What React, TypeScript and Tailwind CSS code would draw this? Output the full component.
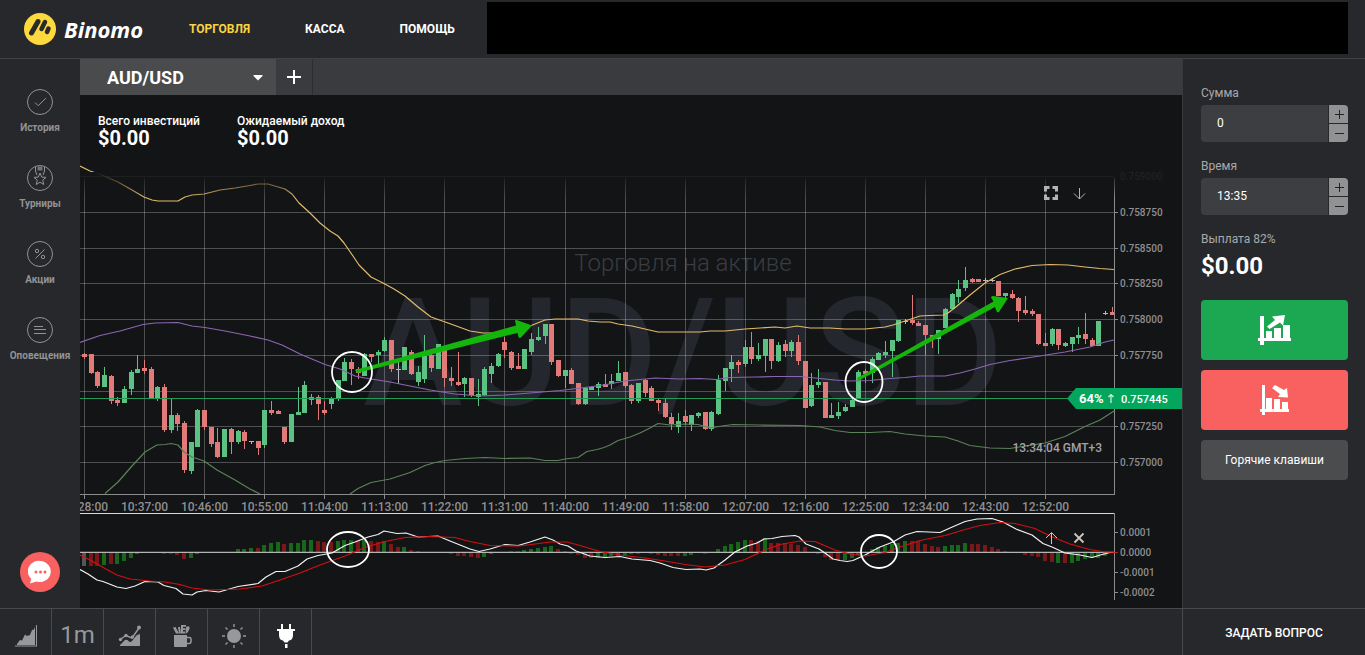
import React, { useState } from "react";

type Tone = "r" | "g" | "w";
type Candle = [number, number, number, number, Tone];

// [high, body top, body bottom, low, tone], one entry for each minute
const CANDLES: Candle[] = [
  [353, 354, 357, 359, "r"], [354, 354, 373, 374, "r"], [371, 372, 386, 388, "r"], [367, 375, 387, 387, "g"],
  [375, 376, 401, 404, "r"], [397, 400, 403, 406, "r"], [386, 389, 403, 403, "g"], [370, 372, 389, 395, "g"],
  [355, 369, 373, 373, "g"], [360, 368, 371, 374, "r"], [367, 369, 398, 398, "r"], [386, 387, 398, 401, "g"],
  [384, 387, 430, 432, "r"], [398, 415, 430, 433, "g"], [413, 415, 424, 431, "r"], [421, 423, 470, 473, "r"],
  [442, 442, 471, 474, "g"], [409, 410, 447, 447, "g"], [410, 410, 427, 430, "r"], [427, 427, 444, 447, "r"],
  [428, 442, 457, 458, "r"], [429, 429, 457, 457, "g"], [428, 429, 442, 454, "r"], [430, 431, 442, 444, "g"],
  [430, 432, 441, 449, "r"], [441, 441, 442, 444, "w"], [441, 441, 448, 455, "r"], [410, 410, 445, 448, "g"],
  [401, 410, 413, 415, "r"], [410, 411, 414, 414, "r"], [427, 427, 442, 444, "r"], [414, 414, 442, 442, "g"],
  [387, 412, 415, 415, "g"], [381, 385, 413, 413, "g"], [394, 397, 400, 405, "g"], [395, 397, 404, 420, "r"],
  [401, 410, 413, 415, "r"], [397, 398, 404, 409, "g"], [380, 380, 399, 401, "g"], [358, 362, 381, 381, "g"],
  [359, 362, 369, 385, "r"], [367, 369, 373, 379, "r"], [353, 354, 376, 376, "g"], [354, 354, 357, 362, "r"],
  [350, 352, 355, 364, "g"], [337, 340, 351, 352, "g"], [340, 340, 369, 372, "r"], [362, 369, 370, 384, "w"],
  [347, 347, 370, 370, "g"], [350, 352, 374, 375, "r"], [366, 372, 382, 386, "g"], [335, 356, 379, 383, "g"],
  [354, 355, 368, 372, "r"], [344, 344, 369, 369, "g"], [347, 350, 378, 387, "r"], [367, 378, 381, 386, "r"],
  [352, 382, 385, 386, "r"], [377, 378, 384, 397, "g"], [378, 378, 395, 397, "r"], [379, 394, 397, 406, "g"],
  [367, 369, 395, 396, "g"], [363, 366, 374, 383, "g"], [353, 354, 366, 367, "g"], [337, 342, 350, 358, "r"],
  [351, 352, 368, 370, "r"], [353, 366, 369, 369, "r"], [349, 349, 369, 369, "g"], [333, 339, 352, 355, "g"],
  [327, 337, 340, 341, "g"], [324, 324, 336, 344, "g"], [324, 324, 362, 365, "r"], [360, 360, 376, 377, "r"],
  [370, 370, 376, 388, "g"], [368, 370, 384, 384, "r"], [383, 383, 404, 405, "r"], [387, 388, 404, 405, "g"],
  [387, 387, 390, 390, "g"], [382, 384, 388, 396, "g"], [374, 384, 387, 387, "r"], [374, 381, 384, 389, "g"],
  [361, 373, 381, 381, "g"], [372, 372, 386, 388, "r"], [384, 385, 401, 404, "r"], [383, 383, 401, 403, "g"],
  [379, 380, 393, 397, "r"], [386, 388, 401, 401, "r"], [399, 400, 403, 411, "r"], [399, 403, 417, 418, "r"],
  [413, 417, 424, 430, "r"], [413, 421, 427, 433, "g"], [410, 416, 422, 425, "r"], [415, 415, 425, 431, "g"],
  [412, 413, 416, 418, "g"], [412, 412, 429, 430, "r"], [411, 412, 429, 431, "g"], [375, 380, 414, 415, "g"],
  [368, 368, 381, 391, "g"], [355, 362, 369, 382, "g"], [360, 362, 365, 373, "r"], [340, 347, 364, 367, "g"],
  [332, 347, 359, 364, "r"], [343, 355, 359, 361, "g"], [339, 339, 356, 372, "g"], [339, 339, 361, 369, "r"],
  [342, 345, 361, 362, "g"], [340, 344, 351, 357, "r"], [340, 342, 351, 357, "g"], [335, 342, 361, 365, "r"],
  [361, 361, 408, 408, "r"], [373, 385, 406, 407, "g"], [369, 382, 385, 388, "g"], [382, 382, 418, 418, "r"],
  [403, 415, 418, 418, "g"], [402, 412, 416, 419, "g"], [404, 407, 411, 412, "g"], [399, 400, 407, 407, "g"],
  [370, 372, 399, 399, "g"], [369, 371, 374, 383, "r"], [357, 359, 373, 383, "g"], [352, 353, 360, 360, "g"],
  [341, 352, 355, 358, "g"], [340, 340, 351, 377, "g"], [320, 320, 341, 342, "g"], [319, 321, 322, 324, "w"],
  [295, 320, 323, 325, "r"], [321, 323, 326, 326, "r"], [325, 325, 335, 355, "r"], [335, 335, 338, 348, "r"],
  [330, 330, 339, 354, "g"], [308, 309, 328, 328, "g"], [293, 294, 309, 310, "g"], [280, 289, 297, 303, "g"],
  [267, 280, 288, 291, "g"], [278, 279, 282, 283, "r"], [279, 279, 282, 282, "r"], [278, 280, 281, 283, "w"],
  [278, 280, 281, 282, "w"], [281, 281, 296, 296, "r"], [293, 293, 296, 298, "g"], [290, 294, 298, 299, "r"],
  [297, 298, 311, 322, "r"], [296, 310, 313, 315, "r"], [309, 311, 314, 316, "r"], [314, 314, 344, 345, "r"],
  [333, 343, 346, 346, "r"], [328, 329, 344, 346, "g"], [329, 329, 345, 350, "r"], [342, 343, 346, 347, "g"],
  [337, 337, 344, 352, "g"], [327, 335, 338, 344, "g"], [313, 334, 339, 344, "r"], [338, 340, 346, 346, "r"],
  [321, 321, 346, 346, "g"], [311, 313, 314, 315, "w"], [307, 312, 315, 315, "r"],
];

// Signed bar heights; the letter says whether the bar is green or red
const HISTOGRAM =
  "w-14 r-14 r-14 g-13 r-12 g-12 g-9 g-6 g-2 r0 r-1 r0 r-2 r-2 r-3 r-7 g-6 g-2 r0 r-1 r-1 g0 g0 g3 g3 g4 r4 g7 g9 g10 r8 g9 g9 g12 g12 r11 r10 r10 g11 g12 g12 r11 g12 r11 r10 g11 r8 r5 g5 r2 r1 r0 r0 g0 r-1 r-2 r-4 r-4 r-5 r-6 g-5 g-2 g0 g0 r1 r1 g2 g3 g4 g5 g6 r3 r1 r-2 r-3 r-6 r-6 g-6 g-5 g-4 g-4 g-3 g-2 r-2 g-1 r-2 r-3 r-4 r-4 r-4 g-4 g-3 g-1 r-2 g0 g3 g6 g8 g10 g12 r12 r11 g14 r9 r9 r9 r8 r7 r5 r0 r-2 r-5 r-8 r-8 g-8 g-6 g-3 g0 g3 g5 g6 g8 g9 g11 r11 r11 r8 r6 r5 g6 g7 g7 g9 r8 r8 r7 r5 r3 r1 r0 r-1 r-3 r-4 r-5 r-9 r-10 g-11 r-11 g-11 g-9 g-7 g-6 g-6 g-4"
    .split(" ")
    .map((s) => ({ tone: s[0] as Tone, value: Number(s.slice(1)) }));

const UPPER =
  "80,166 90,171 102,175 118,182 132,190 144,197 152,200 158,201 178,201 185,197 192,195 204,194 220,190 235,188 247,186 258,184 268,184 285,189 292,194 299,203 310,213 320,223 330,231 338,236 344,243 353,256 359,265 371,277 383,283 394,289 405,296 418,307 431,317 448,323 470,331 483,333 505,333 530,326 545,320 555,319 578,319 588,321 600,322 610,322 618,324 632,326 645,329 658,332 670,332 685,332 700,332 710,331 725,331 745,329 760,328 775,327 785,328 797,326 810,328 830,328 845,329 865,329 885,327 893,325 905,321 920,316 930,315.5 943,315 948,313 957,306 970,295 985,283 1000,274.5 1015,269 1032,265.5 1050,264.5 1068,265 1085,267 1100,268.5 1114,269.5";
const MIDDLE =
  "80,342.5 100,335.5 120,331 143,324.5 155,323 178,322.5 192,326 205,327.5 225,331 250,336 268,340 282,345 300,354 325,364.5 340,369 355,376 365,378 390,382 410,386 430,390 455,394 480,396 505,395 530,393 560,390.5 585,387.5 600,385.5 612,383.5 625,381 640,379.5 655,378 680,379 700,378.5 716,379.5 730,377.5 755,377 775,376.5 800,376.5 815,378 835,380 850,381 870,380.5 890,378.5 905,377.5 920,376 945,376 960,373 975,369 990,364.5 1010,360.5 1040,356 1065,352 1090,347 1105,342 1114,340";
const LOWER_LEFT =
  "105,493.5 118,482 132,466 145,452 150,449 157,445 165,444.5 171,443.5 178,445 184,452 192,457 204,461 217,470 235,480 250,489 260,494";
const LOWER =
  "350,494 358,488.5 371,482.5 390,479 410,472.5 425,465.5 435,462.5 445,460.5 465,458.5 485,457.5 505,458.5 530,458 545,460.5 558,460.5 565,459 578,457.5 587,451.5 597,449.5 604,447.5 610,445 618,440.5 630,437 640,433 650,428 658,423.5 670,425 685,424 698,424.5 710,428 722,426 733,424.5 760,425 800,425.5 820,427 835,430.5 850,432.5 870,432.5 890,431.5 905,434 925,436 945,437 958,441 970,445.5 990,448 1010,448.5 1025,446 1045,443 1065,436.5 1085,426.5 1100,420 1114,411";
const MACD =
  "80,569.5 88,574 97,580 103,581.5 117,587 126,588.5 135,586 145,581.5 158,582 164,585.5 176,588.5 183,594 192,595 197,592 206,590.5 219,592 238,586.5 258,583.5 266,577 276,571.5 285,571.5 298,566 307,559 318,555.5 332,553 345,545.5 355,542 368,537 378,534.5 384,531 397,533.5 406,533 418,537 438,536 450,541 460,545 470,549 479,551.5 490,549 505,544.5 518,545.5 530,542 545,537 553,540 560,544 568,546 576,551 590,556 605,557.5 620,556.5 632,559 650,560.5 660,563 673,567.5 686,569.5 700,569 706,570 714,568 725,560 735,552 747,546 757,543 764,539 772,538.5 782,536.5 795,535.5 799,537 806,544 819,549 825,553 833,559 840,560.5 847,561.5 853,560.5 865,555 880,547 893,542 905,535 917,531.5 940,532.5 950,528 965,521.5 977,519 992,518.5 1003,522 1016,529 1032,535 1043,543.5 1052,547 1065,553 1080,555 1092,557.5 1102,554.5 1110,552.5 1114,552.5";
const SIGNAL =
  "80,555 92,561 105,568.5 117,575 130,579 150,581 165,582 180,584.5 192,588 210,590 240,589 262,586 280,580 300,573 320,565 345,556 365,547.5 385,541.5 405,537.5 430,536.5 455,537.5 470,541.5 490,545.5 520,546 535,544 550,542 567,542 580,545.5 600,551.5 620,555 645,558 665,561 685,564.5 705,567 725,565 745,559.5 765,550 780,544.5 800,541 815,541.5 835,550 850,554 865,556 885,552.5 900,547 920,540.5 945,535.5 965,529.5 980,525.5 1000,522.5 1015,523.5 1035,528.5 1050,536 1070,544 1090,549.5 1105,552 1118,552.5";

const TIMES: [number, string][] = [
  [84.5, "10:28:00"], [144.5, "10:37:00"], [204.5, "10:46:00"], [264.5, "10:55:00"], [324.5, "11:04:00"],
  [384.5, "11:13:00"], [444.5, "11:22:00"], [504.5, "11:31:00"], [565.5, "11:40:00"], [625.5, "11:49:00"],
  [685.5, "11:58:00"], [745.5, "12:07:00"], [805.5, "12:16:00"], [865.5, "12:25:00"], [925.5, "12:34:00"],
  [985.5, "12:43:00"], [1045.5, "12:52:00"],
];
const PRICES: [number, string][] = [
  [176.5, "0.759000"], [212.5, "0.758750"], [248.5, "0.758500"], [283.5, "0.758250"], [319.5, "0.758000"],
  [355.5, "0.757750"], [391.5, ""], [426.5, "0.757250"], [462.5, "0.757000"],
];
const LEVELS: [number, string][] = [
  [532.5, "0.0001"], [552.5, "0.0000"], [572.5, "-0.0001"], [592.5, "-0.0002"],
];

const TONES: Record<Tone, string> = { r: "#e07b79", g: "#5bc283", w: "#b9b9bd" };
const BARS: Record<Tone, string> = { r: "#7a1719", g: "#17661a", w: "#555557" };
const candleX = (i: number) => Math.round(84 + i * 6.674);

function Chart() {
  return (
    <svg
      viewBox="80 160 1102 448"
      preserveAspectRatio="xMinYMin meet"
      className="block h-auto w-full"
      role="img"
      aria-label="AUD/USD"
      fontFamily="Roboto, sans-serif"
    >
      <defs>
        <linearGradient id="fade" x1="0" y1="0" x2="0" y2="1">
          <stop offset="0" stopColor="#131416" stopOpacity="1" />
          <stop offset="1" stopColor="#131416" stopOpacity="0" />
        </linearGradient>
      </defs>

      <text x="683" y="271" textAnchor="middle" fontSize="24" fontWeight="300" fill="#3a3c43">
        Торговля на активе
      </text>
      <text x="683" y="405" textAnchor="middle" fontSize="150" fontWeight="500" fill="#25272e">
        AUD/USD
      </text>

      <g stroke="#fff" strokeOpacity="0.25" shapeRendering="crispEdges">
        {PRICES.map(([y]) => (
          <line key={y} x1="80" x2="1114" y1={y} y2={y} />
        ))}
        {TIMES.map(([x]) => (
          <line key={x} x1={x} x2={x} y1="178" y2="494" />
        ))}
      </g>

      <g shapeRendering="crispEdges">
        {CANDLES.map(([high, top, bottom, low, tone], i) => {
          const x = candleX(i);
          return (
            <g key={i} fill={TONES[tone]}>
              <rect x={x} y={high} width="1" height={Math.max(low - high, 1)} />
              <rect x={x - 2} y={top} width="5" height={bottom - top} />
            </g>
          );
        })}
      </g>

      <g fill="none" strokeWidth="1.2" strokeLinejoin="round">
        <polyline points={UPPER} stroke="#e3ba6a" />
        <polyline points={MIDDLE} stroke="#8a66b0" />
        <polyline points={LOWER_LEFT} stroke="#5b8259" />
        <polyline points={LOWER} stroke="#5b8259" />
      </g>
      <line x1="80" x2="1070" y1="398.5" y2="398.5" stroke="#239a57" shapeRendering="crispEdges" />

      <g stroke="#8b8b8d" shapeRendering="crispEdges">
        <line x1="80" x2="1114" y1="494.5" y2="494.5" />
        <line x1="1114.5" x2="1114.5" y1="178" y2="495" />
        <line x1="1114.5" x2="1114.5" y1="513" y2="600" />
        {TIMES.map(([x]) => (
          <line key={x} x1={x} x2={x} y1="494" y2="499" />
        ))}
        {PRICES.slice(1).map(([y]) => (
          <line key={y} x1="1114" x2="1118" y1={y} y2={y} />
        ))}
        {LEVELS.map(([y]) => (
          <line key={y} x1="1114" x2="1118" y1={y} y2={y} />
        ))}
      </g>
      <rect x="80" y="172" width="1102" height="26" fill="url(#fade)" />

      <g fontSize="12" fill="#8f8f91" textAnchor="middle" fontWeight="500">
        {TIMES.map(([x, label]) => (
          <text key={x} x={x} y="511">
            {label}
          </text>
        ))}
      </g>
      <g fontSize="10" fill="#8f8f91" fontWeight="500">
        {PRICES.map(([y, label]) => (
          <text key={y} x="1120" y={y + 3.5} fillOpacity={y < 180 ? 0.13 : 1}>
            {label}
          </text>
        ))}
        {LEVELS.map(([y, label]) => (
          <text key={y} x="1120" y={y + 3.5}>
            {label}
          </text>
        ))}
      </g>
      <text x="1102" y="452" textAnchor="end" fontSize="12" fontWeight="500" fill="#a3a3a5">
        13:34:04 GMT+3
      </text>

      <line x1="80" x2="1114" y1="513.5" y2="513.5" stroke="#d8d8d8" shapeRendering="crispEdges" />
      <g shapeRendering="crispEdges">
        {HISTOGRAM.map(({ tone, value }, i) => (
          <rect
            key={i}
            x={candleX(i) - 2}
            y={value > 0 ? 552 - value : 552}
            width="4"
            height={Math.abs(value)}
            fill={BARS[tone]}
          />
        ))}
      </g>
      <line x1="80" x2="1114" y1="552.3" y2="552.3" stroke="#b4b4b4" strokeWidth="1.3" />
      <g fill="none" strokeWidth="1.2" strokeLinejoin="round">
        <polyline points={MACD} stroke="#f2f2f2" />
        <polyline points={SIGNAL} stroke="#d40f12" />
      </g>

      <g fill="#14b60c">
        <path d="M355 370 516 325.500 515 320.500Q516 319.500 518 320.500L532 325.500 521 337.500Q519 338.500 518.500 337L517.500 333 357 373Z" />
        <path d="M857 378 993.500 301.500 991 297.500Q991 296 993 296L1008 298 999 312Q997 313 996.500 311L995 307 858 381Z" />
      </g>
      <g fill="none" stroke="#fff" strokeWidth="1.8">
        <ellipse cx="352" cy="372" rx="20" ry="20" />
        <ellipse cx="864" cy="382" rx="18.500" ry="20" />
        <ellipse cx="348" cy="549.500" rx="21" ry="17.500" />
        <ellipse cx="879" cy="551.500" rx="18" ry="16.500" />
      </g>

      <path d="M1067 398.500 1076 388H1182V409H1076Z" fill="#04a65d" />
      <g fill="#fff">
        <text x="1079" y="403" fontSize="13" fontWeight="700">
          64%
        </text>
        <text x="1121" y="403" fontSize="11" fontWeight="500">
          0.757445
        </text>
      </g>
      <path d="M1111 403v-8.500m-2.500 2.500 2.500-2.500 2.500 2.500" fill="none" stroke="#d5f3e4" strokeWidth="1.200" />
    </svg>
  );
}

function Ring({ children }: { children: React.ReactNode }) {
  return (
    <svg viewBox="0 0 28 28" className="size-7" fill="none" stroke="currentColor" aria-hidden="true">
      <circle cx="14" cy="14" r="12.500" />
      {children}
    </svg>
  );
}

const SIDE_ITEMS = [
  { label: "История", icon: <path d="m9 14.500 3.200 3.200L20 10" /> },
  {
    label: "Турниры",
    icon: (
      <>
        <path d="m14 9 1.700 4.100 4.300.3-3.300 2.800 1 4.300-3.700-2.300-3.700 2.300 1-4.300L8 13.400l4.300-.3z" />
        <path d="M9.500 3v4l1.500 4M18.500 3v4L17 11" />
        <path d="M11.500 2.500h5v4h-5z" fill="currentColor" fillOpacity="0.7" stroke="none" />
      </>
    ),
  },
  {
    label: "Акции",
    icon: (
      <>
        <path d="m9.500 18.500 9-9" />
        <circle cx="11" cy="11" r="1.700" />
        <circle cx="17" cy="17" r="1.700" />
      </>
    ),
  },
  { label: "Оповещения", icon: <path d="M8 10.500h9M8 13.500h12M8 17.500h12" /> },
];

function Stepper({ label, id, initial }: { label: string; id: string; initial: string }) {
  const [value, setValue] = useState(initial);
  return (
    <div className="flex flex-col gap-1">
      <label htmlFor={id} className="text-[12px] leading-4 text-[#a9a9ab]">
        {label}
      </label>
      <div className="flex h-[37px] gap-px overflow-hidden rounded">
        <input
          id={id}
          value={value}
          onChange={(e) => setValue(e.target.value)}
          className="w-0 flex-1 bg-[#3d3e41] pb-[2px] pl-4 text-[12px] text-white outline-none"
        />
        <div className="flex w-[19px] flex-col gap-px">
          <button aria-label={label + " +"} className="flex flex-1 items-center justify-center bg-[#919293]">
            <svg viewBox="0 0 10 10" className="size-[10px]" stroke="#222" aria-hidden="true">
              <path d="M5.500 1v9M1 5.500h9" />
            </svg>
          </button>
          <button aria-label={label + " −"} className="flex flex-1 items-center justify-center bg-[#919293]">
            <svg viewBox="0 0 10 10" className="size-[10px]" stroke="#222" aria-hidden="true">
              <path d="M1 5.500h9" />
            </svg>
          </button>
        </div>
      </div>
    </div>
  );
}

const TOOLS = [
  {
    label: "Тип графика",
    icon: (
      <svg viewBox="0 0 24 24" className="size-6" fill="currentColor" aria-hidden="true">
        <path d="M3 21V20l3-4 2 .5 3-6 2 1.500 3-1 2-5 2-.5 1-3V21z" />
        <path d="M1 21.500h22v1H1zM22 1h1v21h-1z" />
      </svg>
    ),
  },
  { label: "1m", icon: null },
  {
    label: "Индикаторы",
    icon: (
      <svg viewBox="0 0 24 24" className="size-6" fill="currentColor" aria-hidden="true">
        <path d="M2 22v-1l5-5q2-1 3.500 1t3.500 0l4-5q1-1.500 2.500-1.500T22 9v13z" />
        <path d="m2 15.500 6-4 6 2.500 7-10" fill="none" stroke="currentColor" strokeWidth="1.500" />
        <circle cx="2.500" cy="15.500" r="1.700" />
        <circle cx="8" cy="11.500" r="1.700" />
        <circle cx="14.500" cy="13" r="1.700" />
        <circle cx="21" cy="3.500" r="2" />
      </svg>
    ),
  },
  {
    label: "Рисование",
    icon: (
      <svg viewBox="0 0 24 24" className="size-6" fill="currentColor" aria-hidden="true">
        <path d="M4 11h13v11q0 1-1 1H5q-1 0-1-1z" />
        <path d="M17 13.500h2.500q1.500 0 1.500 1.500v2.500q0 2-2 2h-2" fill="none" stroke="currentColor" strokeWidth="1.500" />
        <path d="m3 3.500 2.500-.5L9 9.500H6zM8 3h2l1 6.500H9zM11 1h5v1.700h-3v1.600h2.500V6H13v1.500h2V9.500h-4z" />
        <path d="M16 3q3-1.500 3.500.5T16.500 9.500h-1z" fillRule="evenodd" />
      </svg>
    ),
  },
  {
    label: "Тема",
    icon: (
      <svg viewBox="0 0 24 24" className="size-6" aria-hidden="true">
        <circle cx="12" cy="12" r="7" fill="currentColor" />
        <path
          d="M12 0v3M12 21v3M0 12h3M21 12h3M3.500 3.500l2 2M18.500 18.500l2 2M3.500 20.500l2-2M18.500 5.500l2-2"
          stroke="currentColor"
          strokeWidth="1.400"
        />
      </svg>
    ),
  },
  {
    label: "Подключение",
    icon: (
      <svg viewBox="0 0 24 24" className="size-6 text-white" fill="currentColor" aria-hidden="true">
        <path d="M7 0h2v5h6V0h2v5h4v2h-2v4q0 5-4 5.500l-1.500 2h-3l-1.500-2Q5 16 5 11V7H3V5h4zM11 20h2.500v4H11z" />
      </svg>
    ),
  },
];

function TrendIcon({ up }: { up: boolean }) {
  return (
    <svg viewBox="0 0 34 32" className="h-8 w-[34px]" fill="#fff" aria-hidden="true">
      {up ? (
        <>
          <path d="M2 2h4v22h27v3H6v4H2v-4H0v-3h2z" />
          <path d="M8 17h6v8H8zM16 14h7v11h-7zM25 11h7v14h-7z" />
          <path d="M9 12.500 17 6l-3-3.500L27 1l-2 10.500-3-3-10.500 6.500z" />
        </>
      ) : (
        <>
          <path d="M4 1h3v24h24v3H7v3H4v-3H2v-3h2z" />
          <path d="M8 14h6v12H8zM16 15h6v11h-6zM24 18h6v8h-6z" />
          <path d="m17 1-3 3 8 6-2 3 10 .500L29 4l-3 2z" />
        </>
      )}
    </svg>
  );
}

export default function App() {
  return (
    <div className="flex min-h-screen flex-col bg-[#27282c] font-[Roboto,sans-serif] text-white">
      <header className="flex h-[59px] items-center border-b border-[#404145] pr-[17px]">
        <a href="#" className="flex w-[189px] shrink-0 items-center gap-2 pl-6" aria-label="Binomo">
          <svg viewBox="0 0 32 32" className="size-8" aria-hidden="true">
            <circle cx="16" cy="16" r="16" fill="#fdd93e" />
            <g stroke="#2a2a28" strokeLinecap="round">
              <path d="M7.500 20 14 8.500" strokeWidth="5" />
              <path d="m17.500 16 3.500-7" strokeWidth="4.500" />
              <path d="m23 19 1.500-3.500" strokeWidth="4.500" />
            </g>
          </svg>
          <span className="font-[Open_Sans,sans-serif] text-[22px] font-bold italic leading-8">Binomo</span>
        </a>
        <nav className="flex shrink-0 gap-[55px] text-[12px] font-bold leading-4">
          <a href="#" className="text-[#f9d342]">ТОРГОВЛЯ</a>
          <a href="#">КАССА</a>
          <a href="#">ПОМОЩЬ</a>
        </nav>
        <div className="ml-8 mt-[2px] h-[52px] flex-1 self-start bg-black" />
      </header>

      <div className="flex flex-1">
        <aside className="flex w-20 shrink-0 flex-col items-center justify-between pb-4 pt-[29px]">
          <nav className="flex flex-col gap-[30px]">
            {SIDE_ITEMS.map(({ label, icon }) => (
              <a key={label} href="#" className="flex h-[46px] flex-col items-center justify-between text-[#929395]">
                <Ring>{icon}</Ring>
                <span className="text-[10px] font-bold leading-3">{label}</span>
              </a>
            ))}
          </nav>
          <button aria-label="Чат" className="flex size-10 items-center justify-center rounded-full bg-[#f96060]">
            <svg viewBox="0 0 24 24" className="size-6" aria-hidden="true">
              <path d="M12.500 1a11 10.500 0 1 1-4 20.500L2 23.500l1.200-4.500A11 10.500 0 0 1 12.500 1z" fill="#fff" />
              <g fill="#f96060">
                <circle cx="8" cy="12" r="1.500" />
                <circle cx="12.500" cy="12" r="1.500" />
                <circle cx="17" cy="12" r="1.500" />
              </g>
            </svg>
          </button>
        </aside>

        <main className="flex min-w-0 flex-1 flex-col bg-[#131416]">
          <div className="flex h-9 bg-[#3a3b3e]">
            <div className="relative w-[196px] bg-[#4a4b4d]">
              <select
                aria-label="Актив"
                className="size-full appearance-none bg-transparent pl-[27px] text-[18px] font-bold text-white outline-none"
              >
                <option>AUD/USD</option>
              </select>
              <svg viewBox="0 0 10 6" className="pointer-events-none absolute right-[13px] top-4 h-[6px] w-[10px]" fill="#fff" aria-hidden="true">
                <path d="M1 0h8q1 0 .5 1L5 5.500.5 1Q0 0 1 0z" />
              </svg>
            </div>
            <button aria-label="Добавить актив" className="flex w-[37px] items-center justify-center border-r border-[#2c2d30]">
              <svg viewBox="0 0 14 14" className="size-[14px]" stroke="#fff" strokeWidth="2" aria-hidden="true">
                <path d="M7 0v14M0 7h14" />
              </svg>
            </button>
          </div>

          <dl className="flex h-[65px] gap-[37px] pl-[18px] pt-[18px]">
            <div>
              <dt className="text-[12px] font-medium leading-4">Всего инвестиций</dt>
              <dd className="text-[20px] font-bold leading-[19px]">$0.00</dd>
            </div>
            <div>
              <dt className="text-[12px] font-medium leading-4">Ожидаемый доход</dt>
              <dd className="text-[20px] font-bold leading-[19px]">$0.00</dd>
            </div>
          </dl>

          <div className="relative">
            <Chart />
            <div className="absolute right-24 top-[26px] flex items-center gap-[14px] text-[#b4b4b6]">
              <button aria-label="На весь экран">
                <svg viewBox="0 0 14 14" className="size-[14px]" fill="none" stroke="currentColor" strokeWidth="3" aria-hidden="true">
                  <path d="M1.500 5.500v-4h4M8.500 1.500h4v4M12.500 8.500v4h-4M5.500 12.500h-4v-4" />
                </svg>
              </button>
              <button aria-label="Свернуть график">
                <svg viewBox="0 0 14 14" className="size-[14px]" fill="none" stroke="currentColor" aria-hidden="true">
                  <path d="M7.500 2v11M2 7.500l5.500 5.500L13 7.500" />
                </svg>
              </button>
            </div>
            <div className="absolute right-24 top-[371px] flex items-center gap-[14px] text-[#d0c4c0]">
              <button aria-label="Развернуть индикатор">
                <svg viewBox="0 0 14 14" className="size-[14px]" fill="none" stroke="currentColor" aria-hidden="true">
                  <path d="M7.500 13V2M2 7l5.500-5.500L13 7" />
                </svg>
              </button>
              <button aria-label="Закрыть индикатор">
                <svg viewBox="0 0 14 14" className="size-[14px]" stroke="currentColor" strokeWidth="1.800" aria-hidden="true">
                  <path d="m2.500 2.500 9 9M11.500 2.500l-9 9" />
                </svg>
              </button>
            </div>
          </div>
        </main>

        <aside className="flex w-[183px] shrink-0 flex-col border-l border-[#38393c] pl-[18px] pr-[17px] pt-[26px]">
          <div className="flex flex-col gap-4">
            <Stepper id="amount" label="Сумма" initial="0" />
            <Stepper id="time" label="Время" initial="13:35" />
            <div>
              <p className="text-[12px] leading-4 text-[#a9a9ab]">Выплата 82%</p>
              <p className="pt-[5px] text-[24px] font-bold leading-7">$0.00</p>
            </div>
          </div>
          <div className="flex flex-col gap-[10px] pt-5">
            <button aria-label="Вверх" className="flex h-[60px] items-center justify-center rounded bg-[#1ca852]">
              <TrendIcon up />
            </button>
            <button aria-label="Вниз" className="flex h-[60px] items-center justify-center rounded bg-[#f96060]">
              <TrendIcon up={false} />
            </button>
            <button className="h-10 rounded bg-[#4b4c4e] text-[12px]">Горячие клавиши</button>
          </div>
        </aside>
      </div>

      <footer className="flex h-[47px] border-t border-[#4a4a4d]">
        {TOOLS.map(({ label, icon }) => (
          <button
            key={label}
            aria-label={label}
            className="flex w-[52px] shrink-0 items-center justify-center border-r border-[#4a4a4d] pt-[7px] text-[#97989a]"
          >
            {icon ?? <span className="pb-[2px] text-[24px] leading-7">1m</span>}
          </button>
        ))}
        <a
          href="#"
          className="ml-auto flex w-[183px] items-center justify-center border-l border-[#4a4a4d] pt-[2px] text-[12px] font-medium"
        >
          ЗАДАТЬ ВОПРОС
        </a>
      </footer>
    </div>
  );
}
